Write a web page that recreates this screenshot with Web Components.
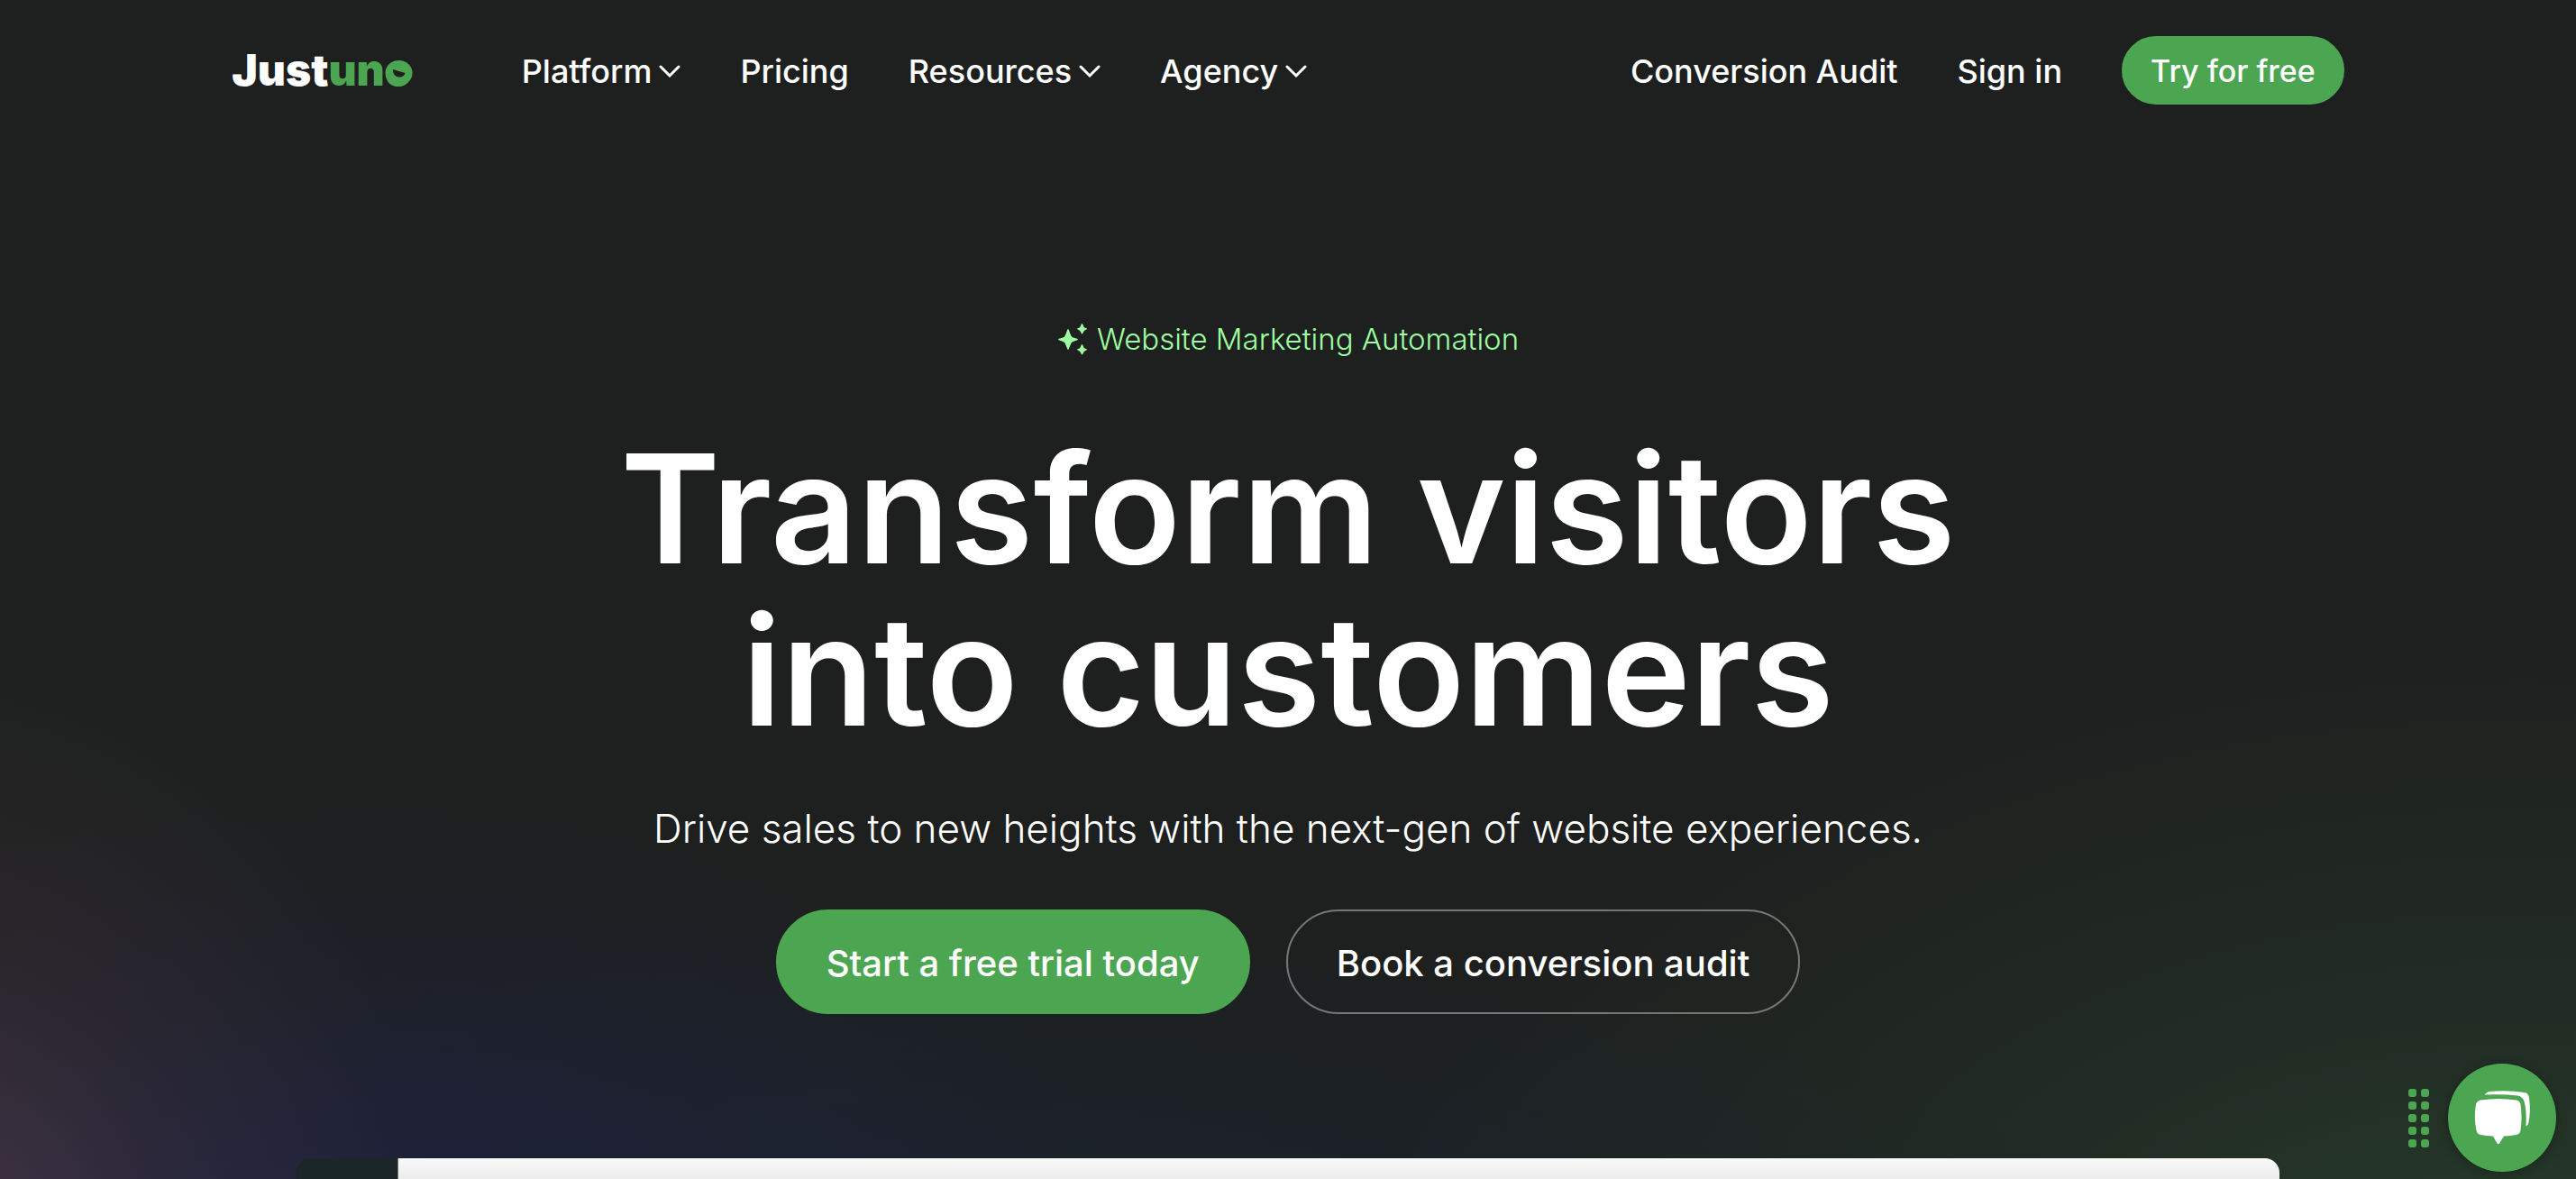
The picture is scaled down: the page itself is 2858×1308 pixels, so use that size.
<!DOCTYPE html>
<html lang="en">
<head>
<meta charset="utf-8">
<meta name="viewport" content="width=device-width, initial-scale=1">
<title>Justuno</title>
<style>
body {
    margin: 0;
    background: #1e201f;
    color: #fff;
    font-family: Inter, "Liberation Sans", sans-serif;
}
</style>
</head>
<body>
<landing-page>
    <site-header slot="header">
        <nav-item slot="main" menu>Platform</nav-item>
        <nav-item slot="main">Pricing</nav-item>
        <nav-item slot="main" menu>Resources</nav-item>
        <nav-item slot="main" menu>Agency</nav-item>
        <nav-item slot="side">Conversion Audit</nav-item>
        <nav-item slot="side">Sign in</nav-item>
        <pill-link slot="side" size="small">Try for free</pill-link>
    </site-header>
    <hero-banner>
        <span slot="eyebrow">Website Marketing Automation</span>
        <span slot="title">Transform visitors<br>into customers</span>
        <span slot="lead">Drive sales to new heights with the next-gen of website experiences.</span>
        <pill-link slot="actions">Start a free trial today</pill-link>
        <pill-link slot="actions" outline>Book a conversion audit</pill-link>
    </hero-banner>
    <product-preview></product-preview>
    <chat-launcher slot="floating"></chat-launcher>
</landing-page>

<script>
class LandingPage extends HTMLElement {

    constructor() {
        super();
        this.shadowDOM = this.attachShadow({mode: "open"});
        this.shadowDOM.innerHTML = `
        <style>
        :host {
            display: flex;
            flex-direction: column;
            height: 100vh;
            overflow: hidden;
            background:
                radial-gradient(ellipse 20% 52% at -3% 108%, rgba(110, 76, 100, 0.5), rgba(110, 76, 100, 0.16) 50%, transparent),
                radial-gradient(ellipse 28% 40% at 15% 106%, rgba(30, 32, 66, 0.8), rgba(30, 32, 66, 0.3) 50%, transparent),
                radial-gradient(ellipse 50% 30% at 33% 108%, rgba(24, 36, 54, 0.7), transparent),
                radial-gradient(ellipse 46% 62% at 98% 116%, rgba(42, 70, 48, 0.85), rgba(42, 70, 48, 0.3) 50%, transparent),
                #1e201f;
        }
        main {
            flex: 1;
            display: flex;
            flex-direction: column;
        }
        </style>
        <slot name="header"></slot>
        <main><slot></slot></main>
        <slot name="floating"></slot>`;
    }
}

class SiteHeader extends HTMLElement {

    constructor() {
        super();
        this.shadowDOM = this.attachShadow({mode: "open"});
        this.shadowDOM.innerHTML = `
        <style>
        :host {
            display: block;
        }
        header {
            display: flex;
            align-items: center;
            justify-content: space-between;
            box-sizing: border-box;
            width: 82%;
            margin: 0 auto;
            padding: 40px 0;
        }
        nav, .side {
            display: flex;
            align-items: center;
            gap: 66px;
        }
        brand-logo {
            margin-right: 56px;
        }
        </style>
        <header>
            <nav aria-label="Main">
                <brand-logo></brand-logo>
                <slot name="main"></slot>
            </nav>
            <div class="side"><slot name="side"></slot></div>
        </header>`;
    }
}

class BrandLogo extends HTMLElement {

    constructor() {
        super();
        this.shadowDOM = this.attachShadow({mode: "open"});
        this.shadowDOM.innerHTML = `
        <style>
        :host {
            display: block;
        }
        a {
            display: flex;
            align-items: baseline;
            color: #fff;
            font: 900 48px/60px Inter, "Liberation Sans", sans-serif;
            text-decoration: none;
        }
        .green {
            color: #4ca651;
        }
        .smile {
            position: relative;
        }
        .smile svg {
            position: absolute;
            left: 0;
            bottom: 11px;
            width: 31px;
            height: 30px;
        }
        </style>
        <a href="#" aria-label="Justuno"><span>Just</span><span class="green">un<span class="smile">o<svg viewBox="0 0 31 30" aria-hidden="true">
            <ellipse cx="15.500" cy="15" rx="15" ry="14" fill="#4ca651"/>
            <path d="M9 11 22.500 15C22 17.500 19 20 15.500 19.500 11 19 8.500 15 9 11Z" fill="#1e201f"/>
        </svg></span></span></a>`;
    }
}

class NavItem extends HTMLElement {

    connectedCallback() {
        const chevron = `<svg viewBox="0 0 24 24" aria-hidden="true"><path d="M2 7 12 17 22 7"/></svg>`;
        this.attachShadow({mode: "open"}).innerHTML = `
        <style>
        :host {
            display: block;
        }
        a, button {
            display: flex;
            align-items: center;
            gap: 8px;
            padding: 2px 0 0;
            border: 0;
            background: none;
            color: #fff;
            font: 500 36px/48px Inter, "Liberation Sans", sans-serif;
            text-decoration: none;
            white-space: nowrap;
            cursor: pointer;
        }
        svg {
            width: 24px;
            height: 24px;
            fill: none;
            stroke: currentColor;
            stroke-width: 3;
            stroke-linecap: round;
        }
        </style>
        ${this.hasAttribute("menu")
            ? `<button type="button" aria-haspopup="true"><slot></slot>${chevron}</button>`
            : `<a href="#"><slot></slot></a>`}`;
    }
}

class PillLink extends HTMLElement {

    constructor() {
        super();
        this.shadowDOM = this.attachShadow({mode: "open"});
        this.shadowDOM.innerHTML = `
        <style>
        :host {
            display: block;
        }
        a {
            display: block;
            padding: 36px 54px 32px;
            border: 2px solid #4ca651;
            border-radius: 60px;
            background: #4ca651;
            color: #fff;
            font-size: 40px;
            font-weight: 500;
            line-height: 44px;
            text-decoration: none;
            white-space: nowrap;
        }
        :host([outline]) a {
            border-color: #777;
            background: none;
        }
        :host([size="small"]) a {
            padding: 13px 30px 11px;
            font-size: 34px;
            line-height: 48px;
        }
        </style>
        <a href="#"><slot></slot></a>`;
    }
}

class HeroBanner extends HTMLElement {

    constructor() {
        super();
        this.shadowDOM = this.attachShadow({mode: "open"});
        this.shadowDOM.innerHTML = `
        <style>
        :host {
            display: flex;
            flex-direction: column;
            align-items: center;
            padding: 196px 40px 160px;
            text-align: center;
        }
        p, h1 {
            margin: 0;
        }
        .eyebrow {
            display: flex;
            align-items: center;
            gap: 8px;
            color: #9dffa1;
            font-size: 33px;
            font-weight: 300;
            line-height: 48px;
        }
        .eyebrow svg {
            width: 36px;
            height: 36px;
        }
        h1 {
            margin-top: 74px;
            font-size: 168px;
            font-weight: 600;
            line-height: 180px;
        }
        .lead {
            margin-top: 53px;
            font-size: 44px;
            font-weight: 300;
            line-height: 64px;
        }
        .actions {
            display: flex;
            gap: 40px;
            margin-top: 58px;
        }
        </style>
        <p class="eyebrow">
            <svg viewBox="0 0 36 36" fill="currentColor" aria-hidden="true">
                <path d="M12 7C13 7 14.500 14 16 15.500 17.500 17 23 17.500 23 18.500 23 19.500 17.500 20.500 16 22 14.500 23.500 13 30 12 30 11 30 9.500 23.500 8 22 6.500 20.500 1 19.500 1 18.500 1 17.500 6.500 17 8 15.500 9.500 14 11 7 12 7Z"/>
                <path d="M27.500 1C28.500 1 29 4.500 30 5.200 31 6 33 6 33 6.800 33 7.500 31 8 30 8.800 29 9.500 28.500 12.500 27.500 12.500 26.500 12.500 26 9.500 25 8.800 24 8 22 7.500 22 6.800 22 6 24 6 25 5.200 26 4.500 26.500 1 27.500 1Z"/>
                <path d="M27.500 24C28.500 24 29 27.500 30 28.200 31 29 33 29 33 29.800 33 30.500 31 31 30 31.800 29 32.500 28.500 35.500 27.500 35.500 26.500 35.500 26 32.500 25 31.800 24 31 22 30.500 22 29.800 22 29 24 29 25 28.200 26 27.500 26.500 24 27.500 24Z"/>
            </svg>
            <slot name="eyebrow"></slot>
        </p>
        <h1><slot name="title"></slot></h1>
        <p class="lead"><slot name="lead"></slot></p>
        <div class="actions"><slot name="actions"></slot></div>`;
    }
}

class ProductPreview extends HTMLElement {

    constructor() {
        super();
        this.shadowDOM = this.attachShadow({mode: "open"});
        this.shadowDOM.innerHTML = `
        <style>
        :host {
            flex: 1;
            display: flex;
            width: 77%;
            margin: 0 auto;
            overflow: hidden;
            border-radius: 16px 16px 0 0;
        }
        .rail {
            flex: 0 0 112px;
            background: #1b2629;
        }
        .screen {
            flex: 1;
            border-left: 1px solid #777;
            background: linear-gradient(#f9f9f9, #ececec);
        }
        </style>
        <div class="rail"></div>
        <div class="screen"></div>`;
    }
}

class ChatLauncher extends HTMLElement {

    constructor() {
        super();
        this.shadowDOM = this.attachShadow({mode: "open"});
        this.shadowDOM.innerHTML = `
        <style>
        :host {
            position: fixed;
            right: 22px;
            bottom: 8px;
            display: flex;
            align-items: center;
            gap: 21px;
        }
        .grip {
            display: grid;
            grid-template-columns: 9px 9px;
            gap: 5px;
        }
        .grip i {
            height: 9px;
            border-radius: 3px;
            background: #4ca651;
        }
        button {
            width: 120px;
            height: 120px;
            padding: 0;
            border: 0;
            border-radius: 50%;
            background: #4ca651;
            box-shadow: 0 2px 12px rgba(0, 0, 0, 0.3);
            cursor: pointer;
        }
        svg {
            display: block;
        }
        </style>
        <div class="grip">${"<i></i>".repeat(10)}</div>
        <button type="button" aria-label="Open chat">
            <svg viewBox="0 0 120 120" width="120" height="120" fill="#fff" aria-hidden="true">
                <path d="M36 40.500Q56 37.500 76 40.500 80 41.500 80.500 45 82.500 60 80.500 74 80 78 76 79 69 80 62 80.500L57 88.500Q56 90 54.500 88.500L50 80.500Q43 80 36 79 32 78 31.500 74 28.500 60 31 45 32 41.500 36 40.500Z"/>
                <path d="M41 34.500Q42 32 46 31 65 29 85 32 89 32.500 90 38 92 52 89.500 65 89 68 86.500 69.500 87.500 52 84.500 42 82.500 36 77 35.500 60 33.500 41 34.500Z"/>
            </svg>
        </button>`;
    }
}

customElements.define("brand-logo", BrandLogo);
customElements.define("nav-item", NavItem);
customElements.define("pill-link", PillLink);
customElements.define("site-header", SiteHeader);
customElements.define("hero-banner", HeroBanner);
customElements.define("product-preview", ProductPreview);
customElements.define("chat-launcher", ChatLauncher);
customElements.define("landing-page", LandingPage);
</script>
</body>
</html>
